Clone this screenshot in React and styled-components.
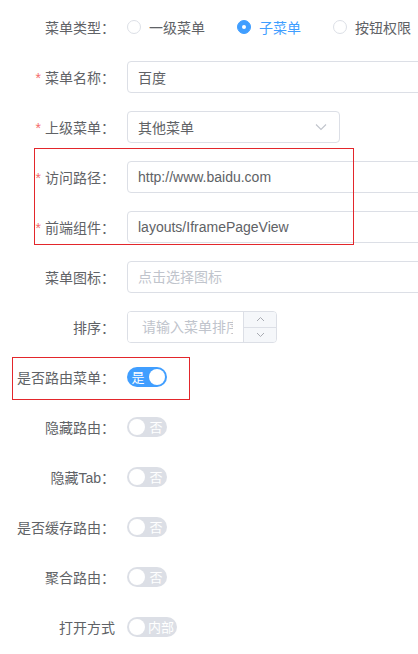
import React from "react";
import styled, { createGlobalStyle } from "styled-components";

const Global = createGlobalStyle`
    body{
        margin:0;
        background:#fff;
        overflow:hidden;
        font-family:"Liberation Sans", "Noto Sans CJK SC", sans-serif;
    }
`

const Page = styled.div`
    position:relative;
    width:418px;
    height:654px;
    overflow:hidden;
    padding-top:11px;
    box-sizing:border-box;
`

const Row = styled.div`
    display:flex;
    align-items:center;
    height:32px;
    margin-bottom:18px;
`

const Label = styled.label`
    width:115px;
    flex-shrink:0;
    padding-right:12px;
    text-align:right;
    font-size:14px;
    color:#606266;
    white-space:nowrap;
    box-sizing:content-box;
`

const Star = styled.span`
    color:#f56c6c;
    margin-right:4px;
`

const Field = styled.div`
    display:flex;
    align-items:center;
    flex-shrink:0;
`

const Input = styled.input`
    width:${p => p.$w || 320}px;
    height:32px;
    box-sizing:border-box;
    border:1px solid #dcdfe6;
    border-radius:4px;
    padding:0 10px;
    font-size:14px;
    font-family:inherit;
    color:#606266;
    outline:none;
    background:#fff;
    &::placeholder{ color:#c0c4cc; }
`

//select box
const SelectBox = styled.div`
    width:213px;
    height:32px;
    box-sizing:border-box;
    border:1px solid #dcdfe6;
    border-radius:4px;
    display:flex;
    align-items:center;
    padding:0 12px 0 10px;
    font-size:14px;
    color:#606266;
    justify-content:space-between;
`

const NumberBox = styled.div`
    display:flex;
    width:150px;
    height:32px;
    box-sizing:border-box;
    border:1px solid #dcdfe6;
    border-radius:4px;
    overflow:hidden;
`

const NumberInput = styled.input`
    flex:1;
    min-width:0;
    border:none;
    outline:none;
    padding:0 10px 0 14px;
    font-size:14px;
    font-family:inherit;
    color:#606266;
    &::placeholder{ color:#c0c4cc; }
`

const Controls = styled.div`
    width:32px;
    flex-shrink:0;
    display:flex;
    flex-direction:column;
    border-left:1px solid #dcdfe6;
    background:#f5f7fa;
`

const Ctrl = styled.div`
    flex:1;
    display:flex;
    align-items:center;
    justify-content:center;
    border-top:${p => p.$bottom ? "1px solid #dcdfe6" : "none"};
`

const RadioGroup = styled.div`
    display:flex;
    align-items:center;
    flex-shrink:0;
    white-space:nowrap;
`

const Radio = styled.div`
    display:flex;
    align-items:center;
    flex-shrink:0;
    margin-right:32px;
    font-size:14px;
    color:${p => p.$checked ? "#409eff" : "#606266"};
`

const RadioDot = styled.span`
    width:14px;
    height:14px;
    box-sizing:border-box;
    border-radius:50%;
    margin-right:8px;
    border:1px solid ${p => p.$checked ? "#409eff" : "#dcdfe6"};
    background:${p => p.$checked ? "#409eff" : "#fff"};
    display:flex;
    align-items:center;
    justify-content:center;
    &::after{
        content:"";
        width:4px;
        height:4px;
        border-radius:50%;
        background:#fff;
        display:${p => p.$checked ? "block" : "none"};
    }
`

const Switch = styled.div`
    width:${p => p.$w || 40}px;
    height:20px;
    border-radius:10px;
    background:${p => p.$on ? "#409eff" : "#dcdfe6"};
    display:flex;
    align-items:center;
    flex-direction:${p => p.$on ? "row-reverse" : "row"};
    padding:0 2px;
    box-sizing:border-box;
    gap:2px;
`

const Knob = styled.span`
    width:16px;
    height:16px;
    border-radius:50%;
    background:#fff;
    flex-shrink:0;
`

const SwitchText = styled.span`
    flex:1;
    text-align:center;
    font-size:13px;
    color:#fff;
    line-height:20px;
    white-space:nowrap;
    font-family:"Noto Sans CJK SC", sans-serif;
`

//red annotation boxes drawn over the form
const Mark = styled.div`
    position:absolute;
    border:1px solid #e3262b;
    pointer-events:none;
`

const Chevron = ({ up, down }) => (
    <svg width="9" height="6" viewBox="0 0 9 6" fill="none" stroke="#a8abb2" strokeWidth="1">
        {up && <path d="M1 5 L4.5 1.5 L8 5" />}
        {down && <path d="M1 1 L4.5 4.5 L8 1" />}
    </svg>
)

const SwitchRow = ({ label, text, on, w }) => (
    <Row>
        <Label>{label}</Label>
        <Field>
            <Switch $on={on} $w={w}>
                <Knob />
                <SwitchText>{text}</SwitchText>
            </Switch>
        </Field>
    </Row>
)

const App = () => {
    return (
        <Page>
            <Global />
            <Row>
                <Label>菜单类型：</Label>
                <RadioGroup>
                    <Radio><RadioDot />一级菜单</Radio>
                    <Radio $checked><RadioDot $checked />子菜单</Radio>
                    <Radio><RadioDot />按钮权限</Radio>
                </RadioGroup>
            </Row>

            <Row>
                <Label><Star>*</Star>菜单名称：</Label>
                <Field><Input defaultValue="百度" /></Field>
            </Row>

            <Row>
                <Label><Star>*</Star>上级菜单：</Label>
                <Field>
                    <SelectBox>
                        <span>其他菜单</span>
                        <svg width="12" height="8" viewBox="0 0 12 8" fill="none" stroke="#c0c4cc" strokeWidth="1.1">
                            <path d="M1 1.5 L6 6.5 L11 1.5" />
                        </svg>
                    </SelectBox>
                </Field>
            </Row>

            <Row>
                <Label><Star>*</Star>访问路径：</Label>
                <Field><Input defaultValue="http://www.baidu.com" /></Field>
            </Row>

            <Row>
                <Label><Star>*</Star>前端组件：</Label>
                <Field><Input defaultValue="layouts/IframePageView" /></Field>
            </Row>

            <Row>
                <Label>菜单图标：</Label>
                <Field><Input placeholder="点击选择图标" /></Field>
            </Row>

            <Row>
                <Label>排序：</Label>
                <Field>
                    <NumberBox>
                        <NumberInput placeholder="请输入菜单排序" />
                        <Controls>
                            <Ctrl><Chevron up /></Ctrl>
                            <Ctrl $bottom><Chevron down /></Ctrl>
                        </Controls>
                    </NumberBox>
                </Field>
            </Row>

            <SwitchRow label="是否路由菜单：" text="是" on />
            <SwitchRow label="隐藏路由：" text="否" />
            <SwitchRow label="隐藏Tab：" text="否" />
            <SwitchRow label="是否缓存路由：" text="否" />
            <SwitchRow label="聚合路由：" text="否" />
            <SwitchRow label="打开方式" text="内部" w={50} />

            <Mark style={{ left: 34, top: 148, width: 318, height: 95 }} />
            <Mark style={{ left: 12, top: 357, width: 176, height: 41 }} />
        </Page>
    )
}

export default App;
